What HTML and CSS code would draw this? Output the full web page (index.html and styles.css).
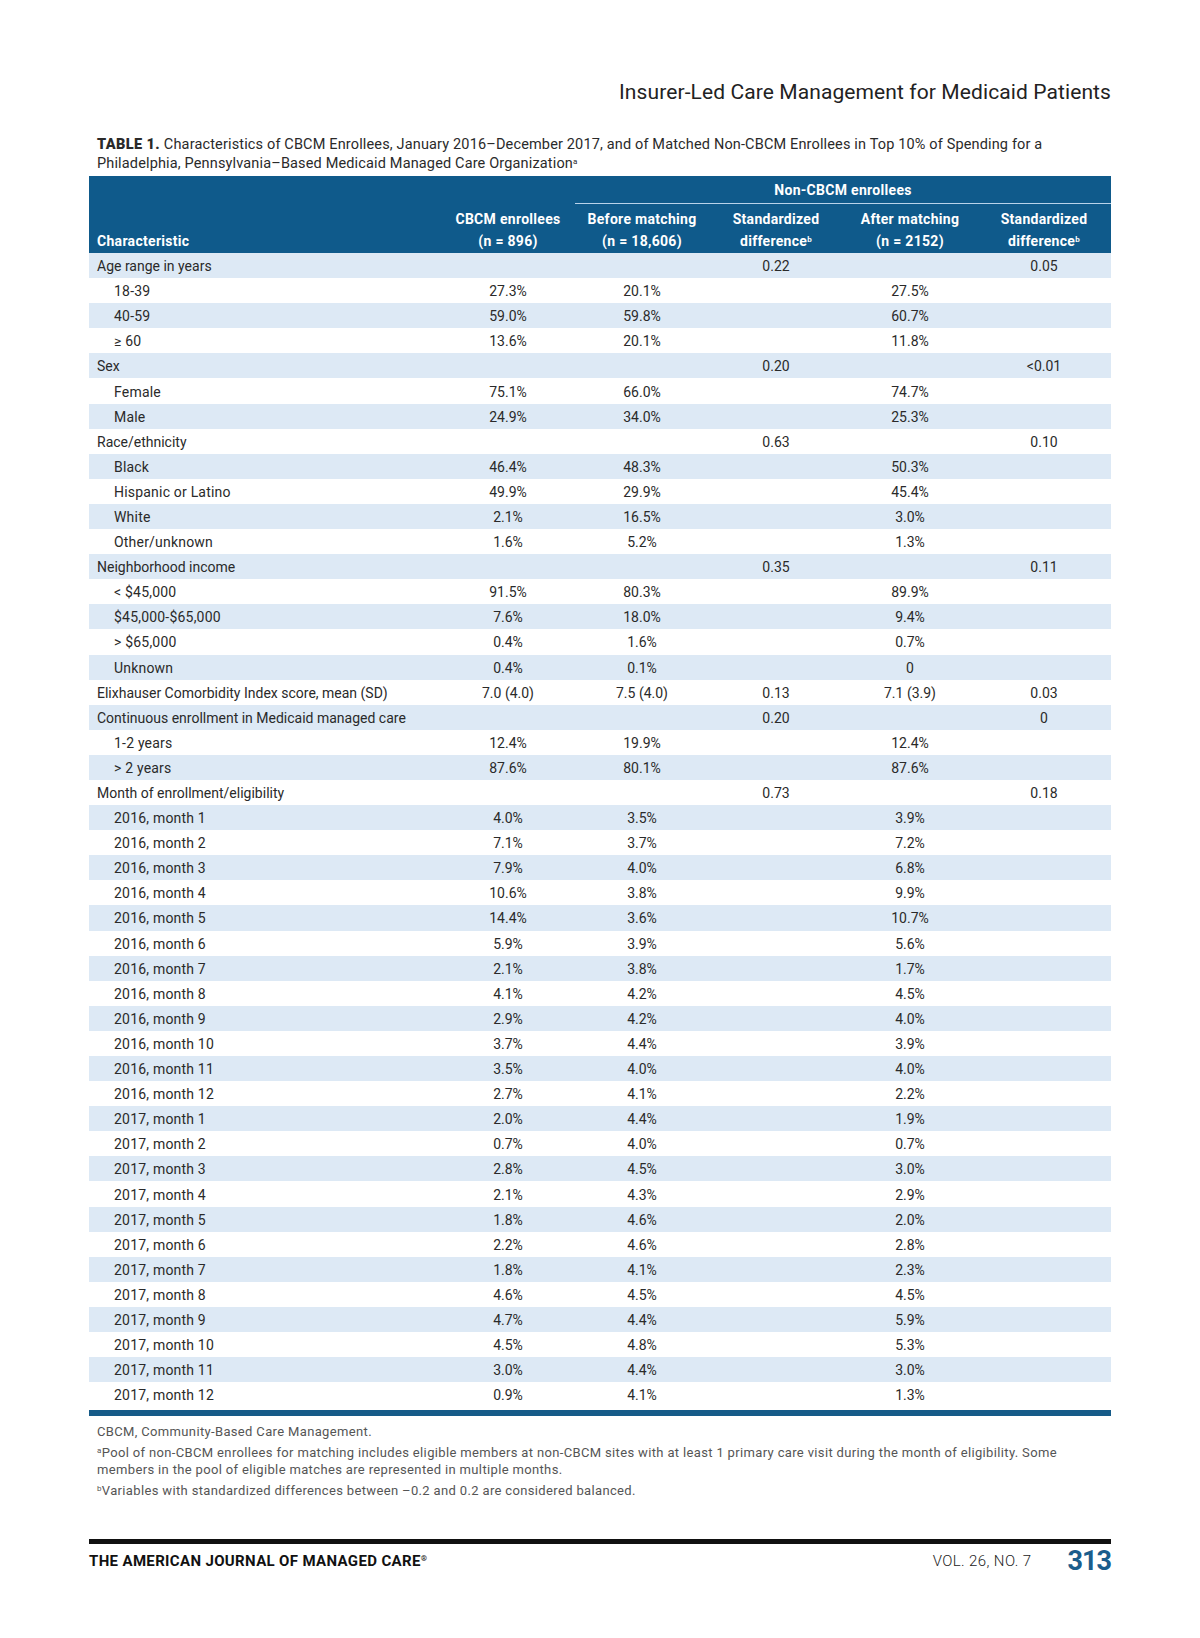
FILE: index.html
```html
<!DOCTYPE html>
<html lang="en">
<head>
<meta charset="utf-8">
<title>Insurer-Led Care Management for Medicaid Patients</title>
<link rel="stylesheet" href="styles.css">
</head>
<body>
<div class="page">
  <div class="running-title">Insurer-Led Care Management for Medicaid Patients</div>

  <p class="caption"><b>TABLE 1.</b> Characteristics of CBCM Enrollees, January 2016–December 2017, and of Matched Non-CBCM Enrollees in Top 10% of Spending for a<br>Philadelphia, Pennsylvania–Based Medicaid Managed Care Organization<sup>a</sup></p>

  <table class="data">
    <colgroup>
      <col class="c-label">
      <col class="c-num"><col class="c-num"><col class="c-num"><col class="c-num"><col class="c-num">
    </colgroup>
    <thead>
      <tr class="h1">
        <th></th>
        <th></th>
        <th colspan="4" class="group">Non-CBCM enrollees</th>
      </tr>
      <tr class="h2">
        <th class="lbl">Characteristic</th>
        <th>CBCM enrollees<br>(n = 896)</th>
        <th>Before matching<br>(n = 18,606)</th>
        <th>Standardized<br>difference<sup>b</sup></th>
        <th>After matching<br>(n = 2152)</th>
        <th>Standardized<br>difference<sup>b</sup></th>
      </tr>
    </thead>
    <tbody>
      <tr><td class="lbl">Age range in years</td><td></td><td></td><td>0.22</td><td></td><td>0.05</td></tr>
      <tr><td class="lbl sub">18-39</td><td>27.3%</td><td>20.1%</td><td></td><td>27.5%</td><td></td></tr>
      <tr><td class="lbl sub">40-59</td><td>59.0%</td><td>59.8%</td><td></td><td>60.7%</td><td></td></tr>
      <tr><td class="lbl sub">≥ 60</td><td>13.6%</td><td>20.1%</td><td></td><td>11.8%</td><td></td></tr>
      <tr><td class="lbl">Sex</td><td></td><td></td><td>0.20</td><td></td><td>&lt;0.01</td></tr>
      <tr><td class="lbl sub">Female</td><td>75.1%</td><td>66.0%</td><td></td><td>74.7%</td><td></td></tr>
      <tr><td class="lbl sub">Male</td><td>24.9%</td><td>34.0%</td><td></td><td>25.3%</td><td></td></tr>
      <tr><td class="lbl">Race/ethnicity</td><td></td><td></td><td>0.63</td><td></td><td>0.10</td></tr>
      <tr><td class="lbl sub">Black</td><td>46.4%</td><td>48.3%</td><td></td><td>50.3%</td><td></td></tr>
      <tr><td class="lbl sub">Hispanic or Latino</td><td>49.9%</td><td>29.9%</td><td></td><td>45.4%</td><td></td></tr>
      <tr><td class="lbl sub">White</td><td>2.1%</td><td>16.5%</td><td></td><td>3.0%</td><td></td></tr>
      <tr><td class="lbl sub">Other/unknown</td><td>1.6%</td><td>5.2%</td><td></td><td>1.3%</td><td></td></tr>
      <tr><td class="lbl">Neighborhood income</td><td></td><td></td><td>0.35</td><td></td><td>0.11</td></tr>
      <tr><td class="lbl sub">&lt; $45,000</td><td>91.5%</td><td>80.3%</td><td></td><td>89.9%</td><td></td></tr>
      <tr><td class="lbl sub">$45,000-$65,000</td><td>7.6%</td><td>18.0%</td><td></td><td>9.4%</td><td></td></tr>
      <tr><td class="lbl sub">&gt; $65,000</td><td>0.4%</td><td>1.6%</td><td></td><td>0.7%</td><td></td></tr>
      <tr><td class="lbl sub">Unknown</td><td>0.4%</td><td>0.1%</td><td></td><td>0</td><td></td></tr>
      <tr><td class="lbl">Elixhauser Comorbidity Index score, mean (SD)</td><td>7.0 (4.0)</td><td>7.5 (4.0)</td><td>0.13</td><td>7.1 (3.9)</td><td>0.03</td></tr>
      <tr><td class="lbl">Continuous enrollment in Medicaid managed care</td><td></td><td></td><td>0.20</td><td></td><td>0</td></tr>
      <tr><td class="lbl sub">1-2 years</td><td>12.4%</td><td>19.9%</td><td></td><td>12.4%</td><td></td></tr>
      <tr><td class="lbl sub">&gt; 2 years</td><td>87.6%</td><td>80.1%</td><td></td><td>87.6%</td><td></td></tr>
      <tr><td class="lbl">Month of enrollment/eligibility</td><td></td><td></td><td>0.73</td><td></td><td>0.18</td></tr>
      <tr><td class="lbl sub">2016, month 1</td><td>4.0%</td><td>3.5%</td><td></td><td>3.9%</td><td></td></tr>
      <tr><td class="lbl sub">2016, month 2</td><td>7.1%</td><td>3.7%</td><td></td><td>7.2%</td><td></td></tr>
      <tr><td class="lbl sub">2016, month 3</td><td>7.9%</td><td>4.0%</td><td></td><td>6.8%</td><td></td></tr>
      <tr><td class="lbl sub">2016, month 4</td><td>10.6%</td><td>3.8%</td><td></td><td>9.9%</td><td></td></tr>
      <tr><td class="lbl sub">2016, month 5</td><td>14.4%</td><td>3.6%</td><td></td><td>10.7%</td><td></td></tr>
      <tr><td class="lbl sub">2016, month 6</td><td>5.9%</td><td>3.9%</td><td></td><td>5.6%</td><td></td></tr>
      <tr><td class="lbl sub">2016, month 7</td><td>2.1%</td><td>3.8%</td><td></td><td>1.7%</td><td></td></tr>
      <tr><td class="lbl sub">2016, month 8</td><td>4.1%</td><td>4.2%</td><td></td><td>4.5%</td><td></td></tr>
      <tr><td class="lbl sub">2016, month 9</td><td>2.9%</td><td>4.2%</td><td></td><td>4.0%</td><td></td></tr>
      <tr><td class="lbl sub">2016, month 10</td><td>3.7%</td><td>4.4%</td><td></td><td>3.9%</td><td></td></tr>
      <tr><td class="lbl sub">2016, month 11</td><td>3.5%</td><td>4.0%</td><td></td><td>4.0%</td><td></td></tr>
      <tr><td class="lbl sub">2016, month 12</td><td>2.7%</td><td>4.1%</td><td></td><td>2.2%</td><td></td></tr>
      <tr><td class="lbl sub">2017, month 1</td><td>2.0%</td><td>4.4%</td><td></td><td>1.9%</td><td></td></tr>
      <tr><td class="lbl sub">2017, month 2</td><td>0.7%</td><td>4.0%</td><td></td><td>0.7%</td><td></td></tr>
      <tr><td class="lbl sub">2017, month 3</td><td>2.8%</td><td>4.5%</td><td></td><td>3.0%</td><td></td></tr>
      <tr><td class="lbl sub">2017, month 4</td><td>2.1%</td><td>4.3%</td><td></td><td>2.9%</td><td></td></tr>
      <tr><td class="lbl sub">2017, month 5</td><td>1.8%</td><td>4.6%</td><td></td><td>2.0%</td><td></td></tr>
      <tr><td class="lbl sub">2017, month 6</td><td>2.2%</td><td>4.6%</td><td></td><td>2.8%</td><td></td></tr>
      <tr><td class="lbl sub">2017, month 7</td><td>1.8%</td><td>4.1%</td><td></td><td>2.3%</td><td></td></tr>
      <tr><td class="lbl sub">2017, month 8</td><td>4.6%</td><td>4.5%</td><td></td><td>4.5%</td><td></td></tr>
      <tr><td class="lbl sub">2017, month 9</td><td>4.7%</td><td>4.4%</td><td></td><td>5.9%</td><td></td></tr>
      <tr><td class="lbl sub">2017, month 10</td><td>4.5%</td><td>4.8%</td><td></td><td>5.3%</td><td></td></tr>
      <tr><td class="lbl sub">2017, month 11</td><td>3.0%</td><td>4.4%</td><td></td><td>3.0%</td><td></td></tr>
      <tr><td class="lbl sub">2017, month 12</td><td>0.9%</td><td>4.1%</td><td></td><td>1.3%</td><td></td></tr>
    </tbody>
  </table>
  <div class="table-rule"></div>

  <div class="notes">
    <p>CBCM, Community-Based Care Management.</p>
    <p><sup>a</sup>Pool of non-CBCM enrollees for matching includes eligible members at non-CBCM sites with at least 1 primary care visit during the month of eligibility. Some<br>members in the pool of eligible matches are represented in multiple months.</p>
    <p><sup>b</sup>Variables with standardized differences between –0.2 and 0.2 are considered balanced.</p>
  </div>

  <footer class="footer">
    <span class="journal">THE AMERICAN JOURNAL OF MANAGED CARE<sup>®</sup></span>
    <span class="issue">VOL. 26, NO. 7</span>
    <span class="pageno">313</span>
  </footer>
</div>
</body>
</html>
```

FILE: styles.css
```css
html, body {
  margin: 0;
  padding: 0;
  background: #ffffff;
}

.page {
  width: 1022px;
  padding: 80px 89px 0 89px;
  font-family: Roboto, "Liberation Sans", sans-serif;
  color: #2a2a2a;
}

.running-title {
  text-align: right;
  font-size: 21px;
  line-height: 24px;
  font-weight: 400;
  color: #222;
  letter-spacing: 0.1px;
}

.caption {
  margin: 31px 0 0 8px;
  font-size: 14.5px;
  line-height: 19px;
  letter-spacing: 0.15px;
  color: #2a2a2a;
}
.caption b {
  font-weight: 900;
  letter-spacing: 0.4px;
}
.caption sup,
.data sup,
.notes sup {
  font-size: 8px;
  line-height: 0;
  vertical-align: 4px;
}

.data {
  margin-top: 3px;
  width: 1022px;
  border-collapse: collapse;
  table-layout: fixed;
  font-size: 14px;
}
.c-label { width: 352px; }
.c-num { width: 134px; }

.data thead th {
  background: #0f5a8b;
  color: #ffffff;
  font-weight: 700;
  padding: 0;
  line-height: 22px;
  text-align: center;
  letter-spacing: 0.3px;
}
.data .h1 th {
  height: 27px;
  vertical-align: middle;
  padding-top: 1px;
  box-sizing: border-box;
}
.data .h1 th.group {
  border-bottom: 1.5px solid #b9d3ea;
}
.data .h2 th {
  height: 50px;
  vertical-align: bottom;
  padding-bottom: 1px;
  box-sizing: border-box;
}
.data .h2 th.lbl {
  text-align: left;
  padding-left: 8px;
}

.data tbody td {
  height: 24.1px;
  padding: 1px 0 0 0;
  text-align: center;
  line-height: 18px;
  color: #2a2a2a;
}
.data tbody tr:nth-child(odd) td {
  background: #dde9f5;
}
.data tbody td.lbl {
  text-align: left;
  padding-left: 8px;
}
.data tbody td.sub {
  padding-left: 25px;
  letter-spacing: 0.2px;
}

.table-rule {
  height: 6px;
  margin-top: 3px;
  background: #165b88;
}

.notes {
  margin-top: 8px;
  padding-left: 8px;
  font-size: 13px;
  line-height: 16.5px;
  letter-spacing: 0.35px;
  color: #555;
}
.notes p {
  margin: 0 0 4.5px 0;
}

.footer {
  margin-top: 40px;
  border-top: 5px solid #111;
  display: flex;
  align-items: center;
  height: 34px;
}
.journal {
  font-size: 15px;
  font-weight: 700;
  color: #111;
  letter-spacing: 0.35px;
  flex: 1;
}
.journal sup {
  font-size: 8px;
  vertical-align: 5px;
  line-height: 0;
}
.issue {
  font-size: 15px;
  font-weight: 300;
  color: #222;
  letter-spacing: 0.4px;
  margin-right: 36px;
}
.pageno {
  font-size: 27px;
  font-weight: 700;
  color: #1b5d8c;
  letter-spacing: -1px;
}
```
